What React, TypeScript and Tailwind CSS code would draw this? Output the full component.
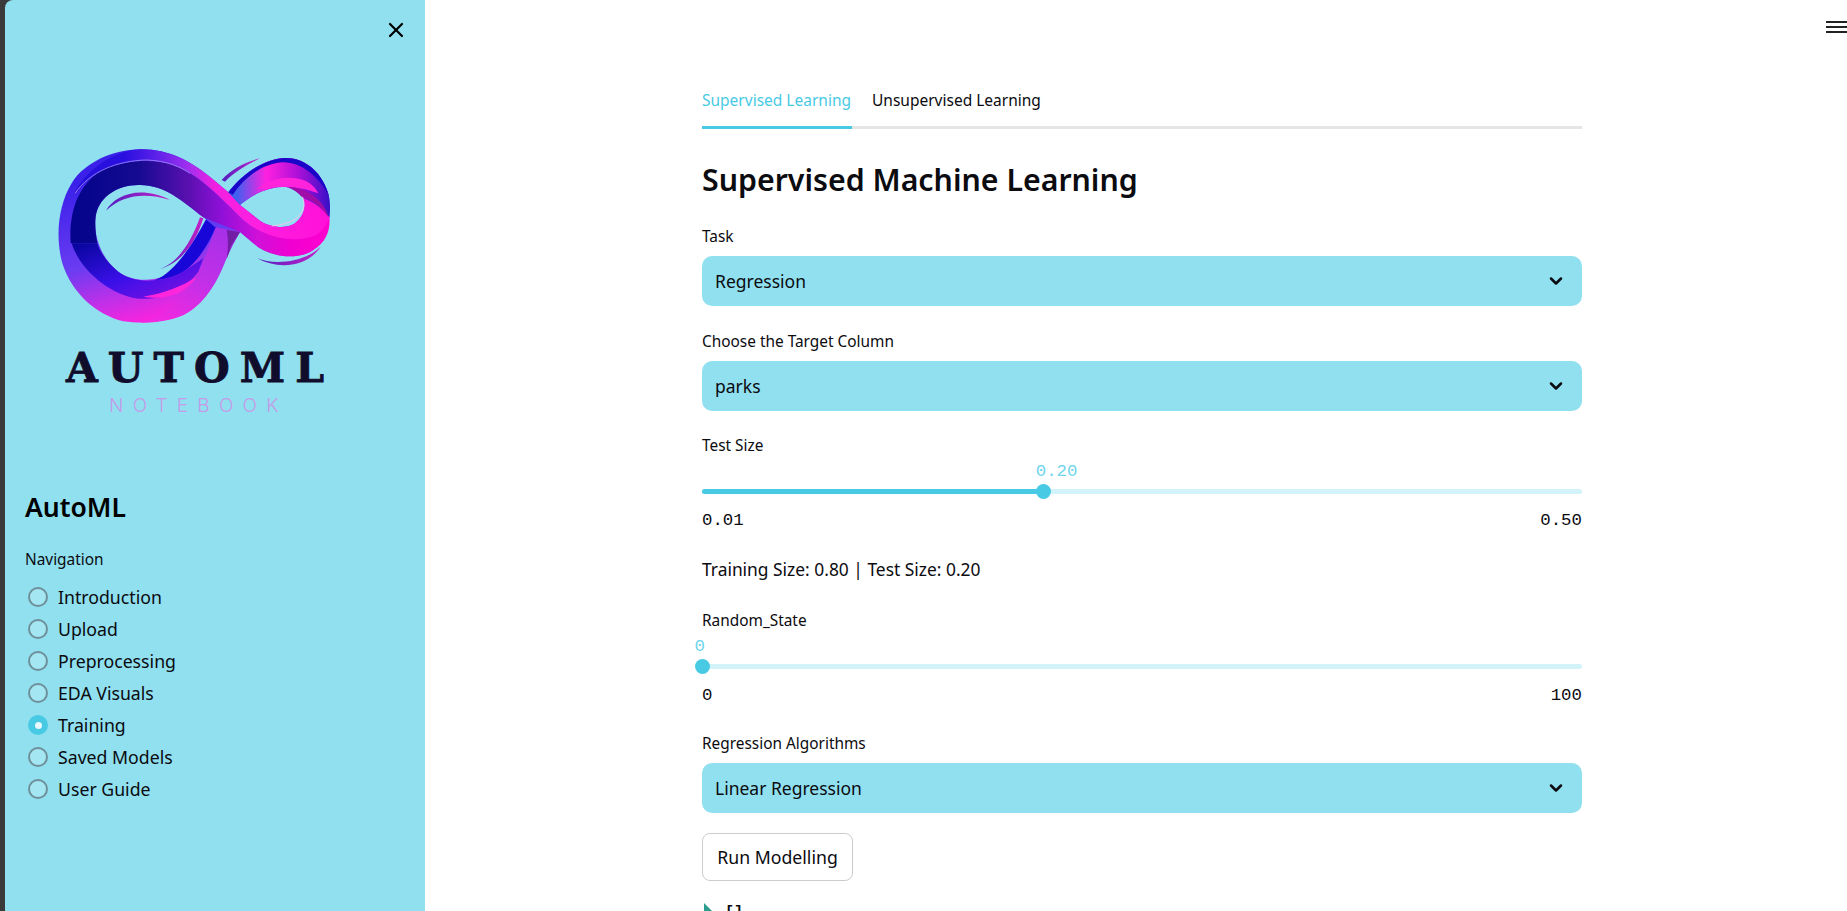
import { ChevronDown, X } from 'lucide-react';

const navItems = ['Introduction', 'Upload', 'Preprocessing', 'EDA Visuals', 'Training', 'Saved Models', 'User Guide'];

function Logo() {
  return (
    <svg width="310" height="200" viewBox="0 0 930 600" className="block">
      <defs>
        <linearGradient id="body" x1="0.02" y1="0.2" x2="0.34" y2="1">
          <stop offset="0" stopColor="#3a20e8" />
          <stop offset="0.55" stopColor="#6a3cf2" />
          <stop offset="0.8" stopColor="#c030e8" />
          <stop offset="1" stopColor="#ff22dc" />
        </linearGradient>
        <linearGradient id="lower" x1="0" y1="0" x2="1" y2="1">
          <stop offset="0" stopColor="#05059a" />
          <stop offset="0.5" stopColor="#3a10e8" />
          <stop offset="1" stopColor="#8a10e0" />
        </linearGradient>
        <linearGradient id="dark" gradientUnits="userSpaceOnUse" x1="100" y1="0" x2="868" y2="0">
          <stop offset="0" stopColor="#04048c" />
          <stop offset="0.25" stopColor="#140a90" />
          <stop offset="0.45" stopColor="#5a10b0" />
          <stop offset="0.58" stopColor="#9010d8" />
          <stop offset="0.72" stopColor="#d010d8" />
          <stop offset="0.85" stopColor="#f000d0" />
          <stop offset="1" stopColor="#ff00d0" />
        </linearGradient>
        <linearGradient id="upper" gradientUnits="userSpaceOnUse" x1="100" y1="0" x2="868" y2="0">
          <stop offset="0" stopColor="#2410dc" />
          <stop offset="0.2" stopColor="#2a10e0" />
          <stop offset="0.32" stopColor="#5a20e8" />
          <stop offset="0.45" stopColor="#a030f0" />
          <stop offset="0.55" stopColor="#f020e0" />
          <stop offset="0.7" stopColor="#ff20e0" />
          <stop offset="1" stopColor="#ff10d8" />
        </linearGradient>
        <linearGradient id="rightTop" gradientUnits="userSpaceOnUse" x1="590" y1="0" x2="868" y2="0">
          <stop offset="0" stopColor="#4060f0" />
          <stop offset="0.32" stopColor="#ff20e0" />
          <stop offset="0.65" stopColor="#b010d8" />
          <stop offset="1" stopColor="#3a10c8" />
        </linearGradient>
        <linearGradient id="cross" x1="0.7" y1="0" x2="0.3" y2="1">
          <stop offset="0" stopColor="#a830e8" />
          <stop offset="0.5" stopColor="#c030e8" />
          <stop offset="1" stopColor="#f028e0" />
        </linearGradient>
        <linearGradient id="swoosh" x1="0" y1="0" x2="1" y2="0">
          <stop offset="0" stopColor="#5020c0" />
          <stop offset="1" stopColor="#c820c8" />
        </linearGradient>
      </defs>
      {/* outer silhouette, with the two holes */}
      <path
        fill="url(#body)"
        fillRule="evenodd"
        d="M300 58C380 56 450 90 515 145L565 187C605 135 665 90 730 84C800 80 850 135 866 195C876 250 866 320 820 360C780 388 705 385 655 352L600 306C580 340 568 365 555 395C530 460 490 525 430 555C380 578 310 582 250 574C170 555 95 490 67 400C45 320 55 225 95 160C135 95 220 60 300 58Z M300 165C235 163 170 200 166 270C162 330 190 390 235 425C270 452 325 455 370 440C430 420 480 360 525 290L490 262C430 215 375 165 300 165Z M735 170C690 170 640 190 600 225L660 272C690 292 740 298 765 280C790 260 800 230 790 205C780 190 760 175 735 170Z"
      />
      {/* band that goes down under the crossing */}
      <path
        fill="url(#cross)"
        d="M527 292L600 306C580 340 568 365 555 395C530 460 490 525 430 555C395 570 345 577 300 578C370 560 430 510 472 432C490 400 510 340 527 292Z"
      />
      <path fill="#6a1a98" fillOpacity="0.85" d="M560 300L600 306L575 345L560 388C565 355 565 325 560 300Z" />
      <path fill="#1806d8" d="M498 268L527 292C505 345 470 400 430 425C405 440 375 448 345 450C400 430 455 350 498 268Z" />
      {/* lower part of the dark band */}
      <path
        fill="url(#lower)"
        d="M95 340C120 420 210 495 295 506C365 510 425 490 475 425L490 385L430 425C405 440 375 448 345 450C325 455 270 452 235 425C205 400 180 370 172 340Z"
      />
      <path fill="#ff26dc" d="M310 500C370 490 425 470 470 440C445 480 400 500 360 503C340 504 325 503 310 500Z" />
      {/* dark band and ribbon */}
      <path
        fill="url(#dark)"
        d="M92 340C85 240 120 150 200 115C260 90 340 85 400 105C470 130 530 190 600 260C660 320 760 340 840 290L868 255C872 300 860 335 820 360C780 388 705 385 655 352L600 306L490 262C430 215 375 165 300 165C235 163 170 200 166 270C165 295 168 320 172 340Z"
      />
      <path
        fill="url(#upper)"
        d="M100 195C140 115 225 62 300 58C380 56 450 90 515 145L565 187L600 225L660 272C690 292 740 298 765 280C790 260 800 230 790 205C820 215 855 240 868 262C860 285 850 300 830 315C760 345 660 320 600 260C530 190 470 130 400 105C340 85 260 90 200 115C160 135 125 160 100 195Z"
      />
      <path fill="none" stroke="#a090f0" strokeOpacity="0.8" strokeWidth="3" d="M105 190C150 125 230 92 320 90C380 92 420 110 450 130" />
      {/* right loop */}
      <path
        fill="url(#rightTop)"
        d="M565 187C605 135 665 90 730 84C800 80 850 135 866 195C872 225 870 245 868 262C855 240 820 215 790 205C780 190 760 175 735 170C690 170 640 190 600 225Z"
      />
      <path fill="#ff24dc" d="M650 178C690 145 740 135 790 150C810 158 825 170 835 190C810 180 770 170 735 170C705 170 675 172 650 178Z" />
      <path fill="#1a06c8" d="M565 187C605 135 665 90 730 84C800 80 850 135 866 195C835 140 785 95 725 97C665 102 610 145 578 195Z" />
      <path fill="#a00ca8" d="M745 171C795 172 850 205 866 262C840 225 805 205 785 200C775 188 760 178 745 171Z" />
      <path fill="none" stroke="#ffc0f0" strokeOpacity="0.85" strokeWidth="3" d="M787 200C802 235 785 280 695 288" />
      {/* swooshes */}
      <path fill="url(#swoosh)" d="M198 242C225 195 300 165 390 210C320 188 250 192 198 242Z" />
      <path fill="url(#swoosh)" d="M357 418C410 400 450 345 480 262L490 265C465 345 420 400 357 418Z" />
      <path fill="url(#swoosh)" d="M545 150C575 115 620 95 660 85C620 105 585 125 555 155Z" />
      <path fill="url(#swoosh)" d="M652 385C700 405 790 400 842 350C800 415 710 418 652 385Z" />
    </svg>
  );
}

function Select({ value }: { value: string }) {
  return (
    <div className="mt-[10px] flex h-[50px] items-center justify-between rounded-[10px] bg-[#90e0ef] pl-[13px] pr-4 text-[17.5px]">
      <span>{value}</span>
      <ChevronDown size={20} strokeWidth={3} />
    </div>
  );
}

function Slider({ value, min, max, decimals }: { value: number; min: number; max: number; decimals: number }) {
  const pct = ((value - min) / (max - min)) * 100;
  return (
    <div>
      <div className="relative h-[20px]">
        <span
          className="absolute top-[1px] -ml-[7.5px] font-['Liberation_Mono',monospace] text-[17.4px] leading-[20px] text-[#6fd6ec]"
          style={{ left: `${pct}%` }}
        >
          {value.toFixed(decimals)}
        </span>
      </div>
      <div className="relative mt-2 h-[5px] rounded-full bg-[#d2f3f9]">
        <div className="h-full rounded-full bg-[#48cae4]" style={{ width: `${pct}%` }} />
        <div
          className="absolute top-[-5px] -ml-[7.5px] size-[15px] rounded-full bg-[#48cae4]"
          style={{ left: `${pct}%` }}
        />
      </div>
      <div className="mt-[17px] flex h-5 justify-between font-['Liberation_Mono',monospace] text-[17.4px] leading-5">
        <span>{min.toFixed(decimals)}</span>
        <span>{max.toFixed(decimals)}</span>
      </div>
    </div>
  );
}

export default function App() {
  return (
    <div className="relative flex h-[911px] overflow-hidden bg-[#3a3a3a] pl-[5px] font-['Noto_Sans',sans-serif] text-[#0b0b10]">
      <aside className="h-full w-[420px] shrink-0 rounded-tl-lg bg-[#90e0ef]">
        <div className="flex h-[130px] justify-end pr-[17px] pt-[18px]">
          <X size={24} strokeWidth={2.2} className="text-black" />
        </div>
        <div className="pl-[35px]">
          <Logo />
        </div>
        <div className="mt-[14px] flex h-[48px] items-center pl-[61px] font-['DejaVu_Serif',serif] text-[41px] font-bold leading-none tracking-[10px] text-[#100c2c] [-webkit-text-stroke:0.8px_#100c2c]">
          AUTOML
        </div>
        <div className="mt-[1px] flex h-[24px] items-center pl-[104px] font-['Inter',sans-serif] text-[19px] font-light leading-none tracking-[9.2px] text-[#c69ae8]">
          NOTEBOOK
        </div>
        <h2 className="mt-[71px] h-[38px] pl-5 text-[26.5px] font-semibold leading-[38px] text-black">AutoML</h2>
        <p className="mt-[24px] h-5 pl-5 text-[15.4px] leading-5">Navigation</p>
        <ul className="mt-[11px] flex flex-col pl-[23px]">
          {navItems.map((item) =>
            item === 'Training' ? (
              <li key={item} className="flex h-8 items-center gap-[10px] text-[17.7px]">
                <span className="flex size-5 items-center justify-center rounded-full bg-[#48cae4]">
                  <span className="size-[7px] rounded-full bg-[#e8f8fc]" />
                </span>
                {item}
              </li>
            ) : (
              <li key={item} className="flex h-8 items-center gap-[10px] text-[17.7px]">
                <span className="size-5 rounded-full border-2 border-[#6f8f9a] bg-[#a4e6f2]" />
                {item}
              </li>
            ),
          )}
        </ul>
      </aside>

      <main className="h-full flex-1 bg-white pl-[277px]">
        <div className="flex w-[880px] flex-col pt-[80px] text-[15.4px]">
          <div className="flex h-[49px] gap-5 border-b-[3px] border-[#e5e5e5] text-[15.5px]">
            <div className="-mb-[3px] h-[49px] w-[150px] border-b-[3px] border-[#48cae4] pt-[9px] leading-[22px] text-[#48cae4]">
              Supervised Learning
            </div>
            <div className="pt-[9px] leading-[22px]">Unsupervised Learning</div>
          </div>
          <h1 className="mt-[31px] h-10 text-[30.3px] font-semibold leading-10">Supervised Machine Learning</h1>
          <p className="mt-[26px] h-5 leading-[22px]">Task</p>
          <Select value="Regression" />
          <p className="mt-[25px] h-5 leading-[22px]">Choose the Target Column</p>
          <Select value="parks" />
          <p className="mt-[24px] h-5 leading-[22px]">Test Size</p>
          <div className="mt-[6px]">
            <Slider value={0.2} min={0.01} max={0.5} decimals={2} />
          </div>
          <p className="mt-[26px] h-6 text-[17.4px] leading-6">Training Size: 0.80 | Test Size: 0.20</p>
          <p className="mt-[29px] h-5 leading-[22px]">Random_State</p>
          <div className="mt-[6px]">
            <Slider value={0} min={0} max={100} decimals={0} />
          </div>
          <p className="mt-[27px] h-5 leading-[22px]">Regression Algorithms</p>
          <Select value="Linear Regression" />
          <button className="mt-5 h-[48px] w-[151px] rounded-lg border border-[#cccccc] bg-white text-[17.7px]">
            Run Modelling
          </button>
          <div className="ml-[2px] mt-[22px] flex h-5 items-start gap-[13px]">
            <span className="h-0 w-0 border-y-[8px] border-l-[8px] border-y-transparent border-l-[#2a9d8f]" />
            <span className="font-['Liberation_Mono',monospace] text-[15px] font-bold leading-5">[]</span>
          </div>
        </div>
      </main>

      <div className="absolute right-0 top-[21px] flex w-[21px] flex-col gap-[3px]">
        <span className="h-[2px] bg-[#222]" />
        <span className="h-[2px] bg-[#222]" />
        <span className="h-[2px] bg-[#222]" />
      </div>
    </div>
  );
}
